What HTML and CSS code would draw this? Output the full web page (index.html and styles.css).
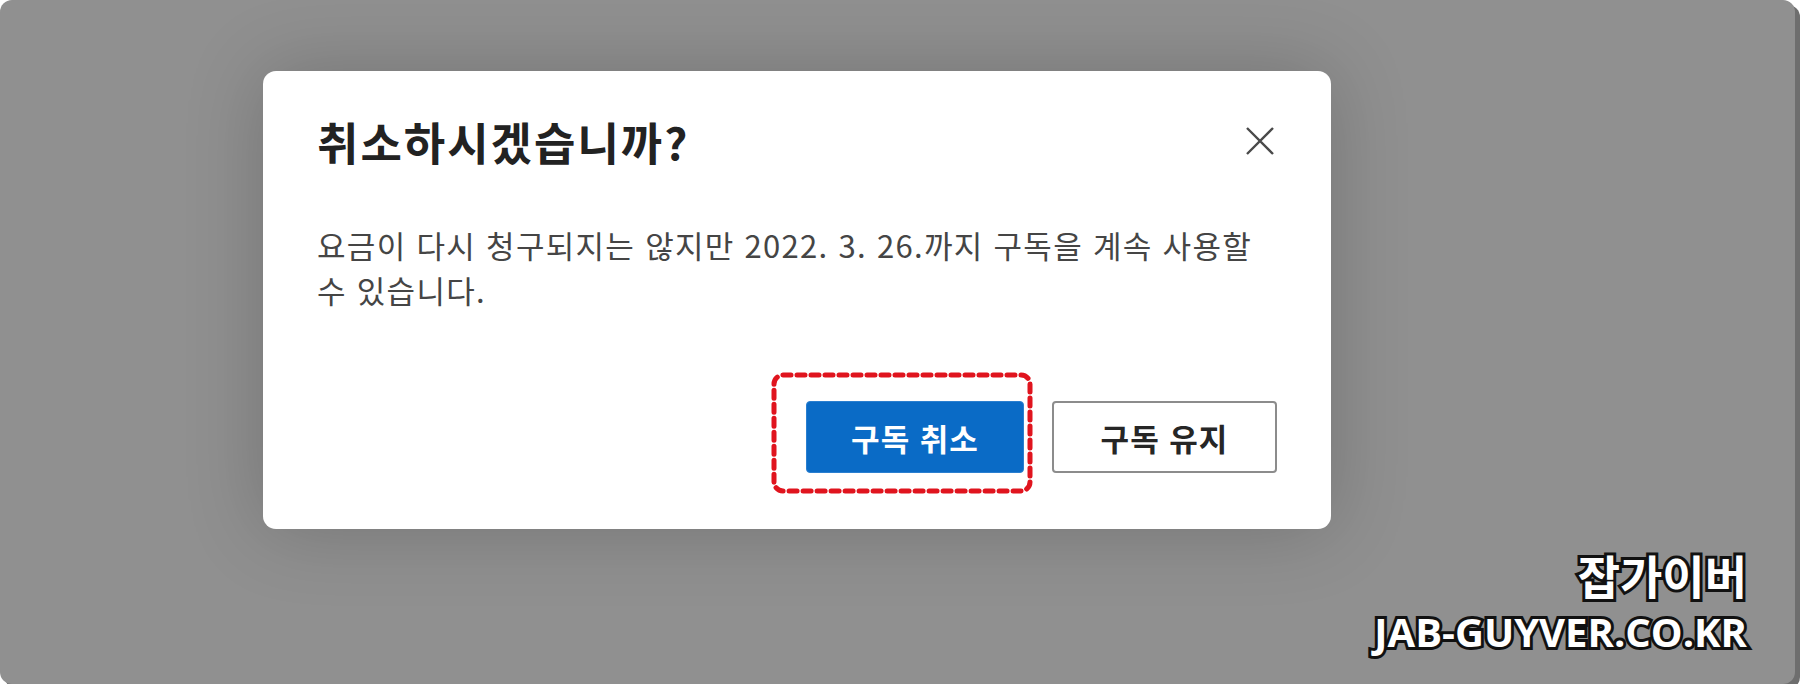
FILE: index.html
```html
<!DOCTYPE html>
<html lang="ko">
<head>
    <meta charset="utf-8">
    <title>구독 취소</title>
    <link rel="stylesheet" href="styles.css">
</head>
<body>
    <div class="frame">
        <div class="dialog">
            <div class="dialog-head">
                <h1>취소하시겠습니까?</h1>
                <button class="close-button" aria-label="닫기">
                    <svg width="28" height="28" viewBox="0 0 28 28">
                        <path d="M1 1 L27 27 M27 1 L1 27" stroke="#4a4a4a" stroke-width="2.4" fill="none"/>
                    </svg>
                </button>
            </div>
            <p class="dialog-text">요금이 다시 청구되지는 않지만 2022. 3. 26.까지 구독을 계속 사용할 수 있습니다.</p>
            <div class="dialog-actions">
                <div class="marked">
                    <button class="btn btn-primary">구독 취소</button>
                    <svg class="mark" width="262" height="122" viewBox="0 0 262 122">
                        <rect x="3" y="3" width="256" height="116" rx="9" ry="9" fill="none" stroke="#e0141e" stroke-width="5" stroke-dasharray="8 6" stroke-linecap="round"/>
                    </svg>
                </div>
                <button class="btn btn-secondary">구독 유지</button>
            </div>
        </div>

        <div class="watermark">
            <div class="watermark-ko">잡가이버</div>
            <div class="watermark-en">JAB-GUYVER.CO.KR</div>
        </div>
    </div>
</body>
</html>
```

FILE: styles.css
```css
body {
    margin: 0;
    padding: 0;
    background-color: #fff;
    font-family: "Noto Sans CJK KR", "Noto Sans", sans-serif;
}

.frame {
    width: 1795px;
    height: 684px;
    box-sizing: border-box;
    padding: 71px 0 0 263px;
    border-radius: 12px;
    background-color: #909090;
    box-shadow: 5px 5px 0 #6e6e6e;
    display: flex;
    flex-direction: column;
    align-items: flex-start;
}

.dialog {
    width: 1068px;
    height: 458px;
    box-sizing: border-box;
    padding: 34px 54px 0 54px;
    background-color: #fff;
    border-radius: 13px;
    box-shadow: 0 0 80px rgba(0, 0, 0, 0.2);
}

.dialog-head {
    display: flex;
    justify-content: space-between;
    align-items: center;
    height: 72px;
}

.dialog-head h1 {
    margin: 0;
    font-size: 45px;
    font-weight: 600;
    color: #222;
    letter-spacing: 2px;
}

.close-button {
    background: none;
    border: none;
    padding: 0;
    margin-right: 3px;
    width: 28px;
    height: 28px;
    display: flex;
}

.dialog-text {
    margin: 45px 0 0 0;
    width: 950px;
    font-size: 31px;
    line-height: 45px;
    letter-spacing: 1.3px;
    color: #454545;
}

.dialog-actions {
    display: flex;
    justify-content: flex-end;
    gap: 28px;
    margin-top: 89px;
}

.marked {
    position: relative;
    display: flex;
}

.mark {
    position: absolute;
    left: -35px;
    top: -29px;
}

.btn {
    width: 218px;
    height: 72px;
    border-radius: 4px;
    font-family: "Noto Sans CJK KR", sans-serif;
    font-size: 31px;
    font-weight: 600;
    letter-spacing: 1px;
    cursor: pointer;
}

.btn-primary {
    background-color: #0a6bc6;
    border: 1px solid #2a7fd0;
    color: #fff;
}

.btn-secondary {
    width: 225px;
    background-color: #fff;
    border: 2px solid #8c8c8c;
    color: #262626;
}

.watermark {
    align-self: flex-end;
    margin: 12px 48px 0 0;
    text-align: right;
    color: #fff;
    font-weight: 700;
    -webkit-text-stroke: 6px #111;
    paint-order: stroke fill;
}

.watermark-ko {
    font-size: 46px;
    line-height: 66px;
}

.watermark-en {
    font-family: "Open Sans", sans-serif;
    font-size: 40px;
    line-height: 50px;
    letter-spacing: 0;
}
```
